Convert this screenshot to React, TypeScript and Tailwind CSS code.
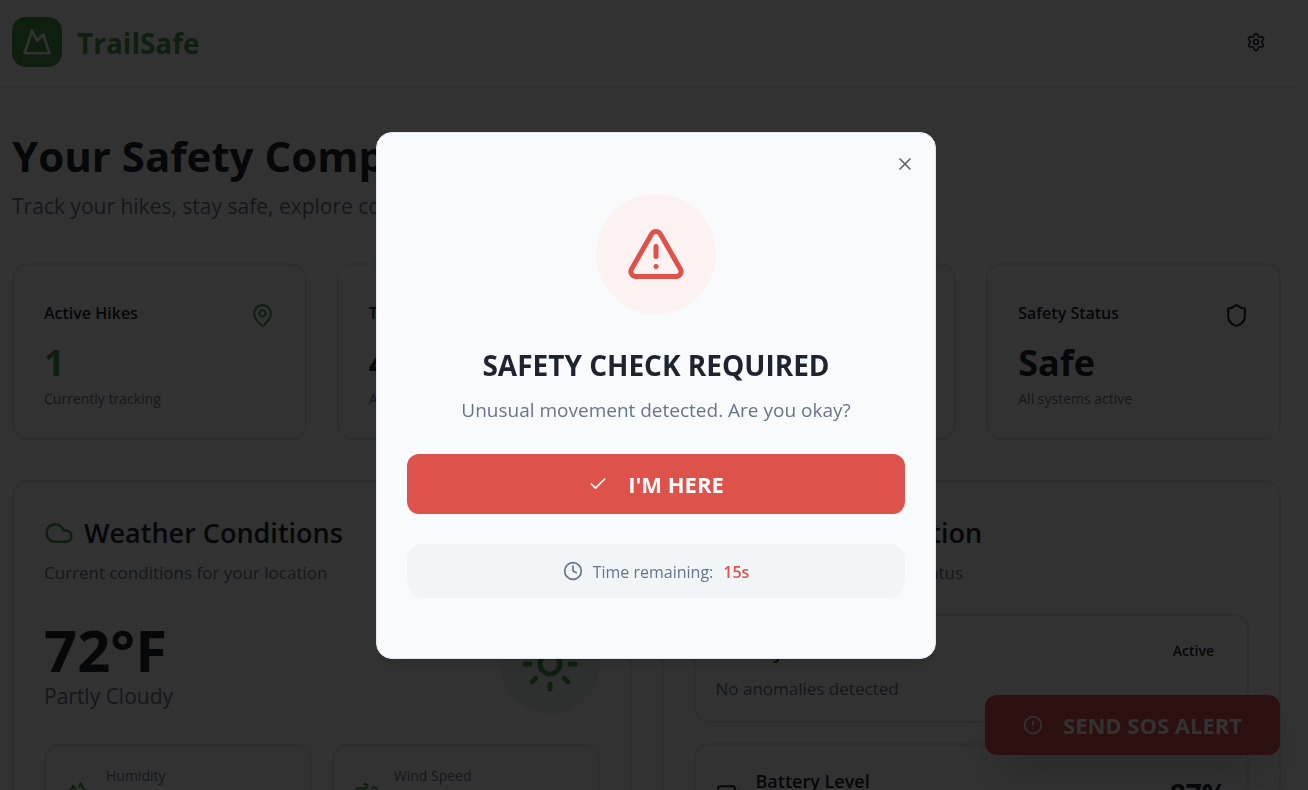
import { Activity, AlertTriangle, Battery, Check, CircleAlert, Clock, Cloud, Droplets, MapPin, Mountain, Settings, Shield, Sun, TrendingUp, Wind, X } from "lucide-react";
import type { ReactNode } from "react";

function StatCard({ title, value, note, icon, green }: { title: string; value: string; note: string; icon: ReactNode; green?: boolean }) {
  return (
    <section className="rounded-2xl border-2 border-[#e1e7ef] px-[30px] pt-9 pb-[29px]">
      <div className="flex h-6 items-start justify-between">
        <h3 className="text-[16px] leading-6 font-semibold">{title}</h3>
        <span className="pt-0.5">{icon}</span>
      </div>
      <p className={green ? "mt-4 text-[36px] leading-[44px] font-bold text-[#459c4a]" : "mt-4 text-[36px] leading-[44px] font-bold"}>{value}</p>
      <p className="mt-1 text-[14px] leading-5 text-[#65758b]">{note}</p>
    </section>
  );
}

function Metric({ label, value, icon }: { label: string; value: string; icon: ReactNode }) {
  return (
    <div className="flex items-center gap-[15px] rounded-2xl border-2 border-[#e1e7ef] px-5 py-[18px]">
      {icon}
      <div>
        <p className="text-[14px] leading-6 text-[#65758b]">{label}</p>
        <p className="text-[22px] leading-8 font-bold">{value}</p>
      </div>
    </div>
  );
}

export default function App() {
  return (
    <div className="h-screen overflow-hidden bg-[#f9fafc] font-['Open_Sans',sans-serif] text-[#1d2430]">
      <header className="mr-[7px] flex items-center justify-between border-b border-[#e1e7ef] pt-[17px] pr-5 pb-5 pl-3">
        <div className="flex items-center gap-[15px]">
          <div className="flex size-[50px] items-center justify-center rounded-[14px] bg-[#459c4a] text-[#f9fafc]">
            <Mountain size={30} />
          </div>
          <span className="pt-0.5 text-[28px] leading-9 font-bold text-[#459c4a]">TrailSafe</span>
        </div>
        <button aria-label="Settings" className="flex size-[50px] items-center justify-center">
          <Settings size={20} />
        </button>
      </header>

      <main className="pr-[27px] pl-3">
        <h1 className="pt-[43px] text-[42px] leading-[50px] font-bold">Your Safety Companion</h1>
        <p className="mt-2 text-[21px] leading-[34px] text-[#65758b]">Track your hikes, stay safe, explore confidently</p>

        <div className="mt-10 grid grid-cols-4 gap-[30px]">
          <StatCard title="Active Hikes" value="1" note="Currently tracking" green icon={<MapPin size={25} className="text-[#459c4a]" />} />
          <StatCard title="Total Distance" value="42.8" note="All time miles" icon={<TrendingUp size={25} />} />
          <StatCard title="Contacts" value="3" note="Ready to notify" icon={<CircleAlert size={25} />} />
          <StatCard title="Safety Status" value="Safe" note="All systems active" icon={<Shield size={25} />} />
        </div>

        <div className="mt-10 grid grid-cols-2 gap-[30px]">
          <section className="rounded-2xl border-2 border-[#e1e7ef] px-[30px] pt-[30px] pb-8">
            <h2 className="flex items-center gap-[10px] text-[27px] leading-[42px] font-semibold">
              <Cloud size={30} className="text-[#459c4a]" />
              Weather Conditions
            </h2>
            <p className="mt-2 text-[17px] leading-[22px] text-[#65758b]">Current conditions for your location</p>
            <div className="mt-[30px] flex items-center justify-between">
              <div className="pt-1">
                <p className="text-[58px] leading-[60px] font-bold">72°F</p>
                <p className="text-[21px] leading-8 text-[#65758b]">Partly Cloudy</p>
              </div>
              <div className="flex size-[100px] items-center justify-center rounded-full bg-[#459c4a]/10 text-[#459c4a]">
                <Sun size={60} />
              </div>
            </div>
            <div className="mt-[30px] grid grid-cols-2 gap-5">
              <Metric label="Humidity" value="65%" icon={<Droplets size={25} className="text-[#459c4a]" />} />
              <Metric label="Wind Speed" value="8 mph" icon={<Wind size={25} className="text-[#459c4a]" />} />
            </div>
          </section>

          <section className="rounded-2xl border-2 border-[#e1e7ef] px-[30px] pt-[30px] pb-8">
            <h2 className="flex items-center gap-[10px] text-[27px] leading-[42px] font-semibold">
              <Activity size={30} />
              Anomaly Detection
            </h2>
            <p className="mt-2 text-[17px] leading-[22px] text-[#65758b]">Real-time behavior tracking status</p>
            <div className="mt-[30px] h-[109px] rounded-2xl border-2 border-[#e1e7ef] px-5 pt-[19px]">
              <div className="flex h-8 items-center justify-between">
                <h3 className="text-[19px] leading-7 font-semibold">Activity Status</h3>
                <span className="px-[13px] text-[14px] leading-5 font-semibold">Active</span>
              </div>
              <p className="mt-[10px] text-[17px] leading-6 text-[#65758b]">No anomalies detected</p>
            </div>
            <div className="mt-5 flex items-center justify-between rounded-2xl border-2 border-[#e1e7ef] px-5 py-[22px]">
              <div className="flex items-center gap-[15px]">
                <Battery size={25} />
                <div>
                  <h3 className="text-[18px] leading-7 font-semibold">Battery Level</h3>
                  <p className="text-[17px] leading-[22px] text-[#65758b]">Device power</p>
                </div>
              </div>
              <span className="pt-1 text-[28px] leading-9 font-bold">87%</span>
            </div>
          </section>
        </div>
      </main>

      <button className="fixed right-7 bottom-[35px] flex h-[60px] items-center gap-5 rounded-xl bg-[#dd524b] px-[38px] text-[22px] font-bold text-[#f9fafc] shadow-2xl">
        <CircleAlert size={20} />
        SEND SOS ALERT
      </button>

      <div className="fixed inset-0 flex justify-center bg-black/80 pt-[132px] pl-1">
        <div role="dialog" aria-modal="true" aria-labelledby="check-title" className="relative flex h-fit w-[560px] flex-col items-center rounded-2xl border border-[#e1e7ef] bg-[#f9fafc] px-[30px] pt-[61px] pb-[60px] shadow-lg">
          <button aria-label="Close" className="absolute top-[21px] right-5 opacity-70">
            <X size={20} />
          </button>
          <div className="flex size-[120px] items-center justify-center rounded-full bg-[#fcf2f1] text-[#dd524b]">
            <AlertTriangle size={60} />
          </div>
          <h2 id="check-title" className="mt-[30px] text-[28px] leading-[42px] font-bold">SAFETY CHECK REQUIRED</h2>
          <p className="mt-[10px] text-[19px] leading-7 text-[#65758b]">Unusual movement detected. Are you okay?</p>
          <button className="mt-[30px] flex h-[60px] w-full items-center justify-center gap-5 rounded-xl bg-[#dd524b] text-[22px] font-bold text-[#f9fafc]">
            <Check size={20} />
            I'M HERE
          </button>
          <div className="mt-[30px] flex h-[54px] w-full items-center justify-center gap-[10px] rounded-2xl bg-[#f1f5f8] text-[16px] text-[#65758b]">
            <Clock size={20} />
            <span className="pt-0.5">Time remaining:</span>
            <span className="pt-0.5 font-semibold text-[#dd524b]">15s</span>
          </div>
        </div>
      </div>
    </div>
  );
}
